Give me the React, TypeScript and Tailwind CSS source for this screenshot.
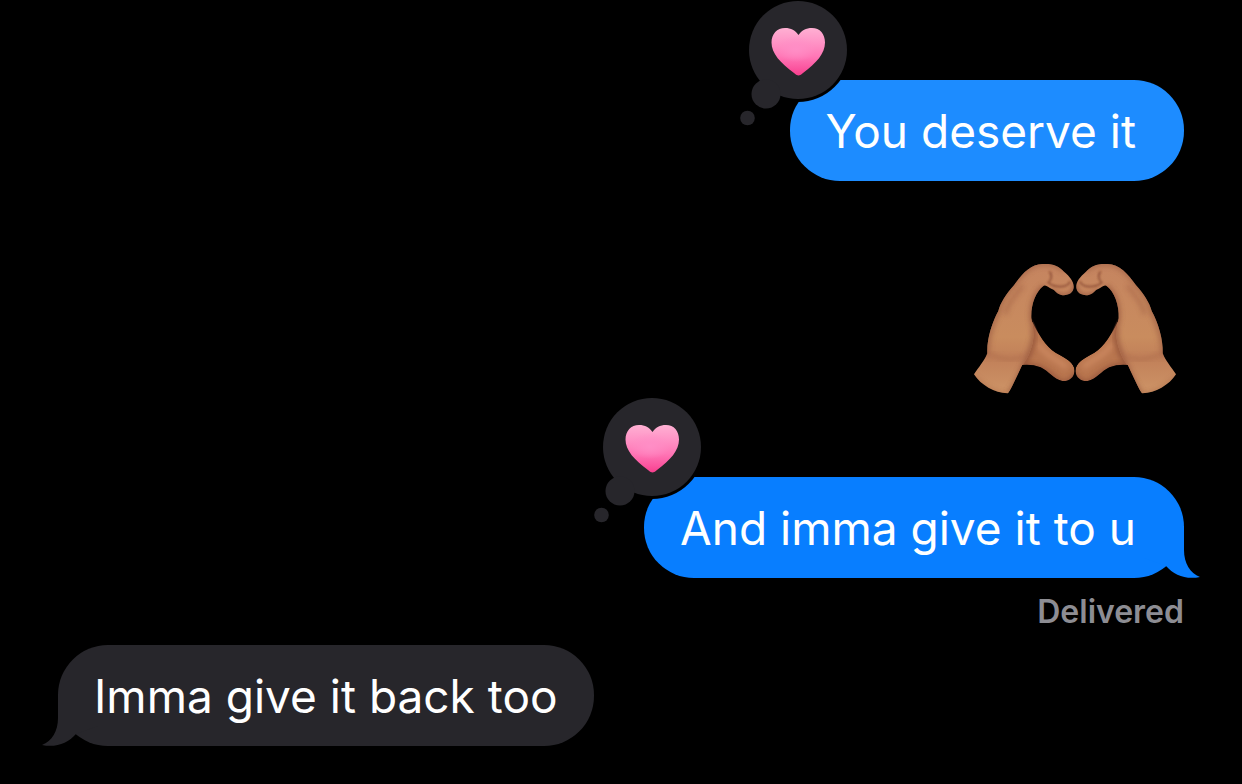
import React from 'react';

interface Message {
    id: number;
    sent: boolean;
    text: string;
    bubble: string;
    loved?: boolean;
    tail?: boolean;
}

const Heart = () => (
    <>
        <defs>
            <linearGradient id="heartFill" x1="0" y1="0" x2="0" y2="1">
                <stop offset="0" stopColor="#ffb0d3" />
                <stop offset="0.3" stopColor="#ff94c6" />
                <stop offset="0.6" stopColor="#ff77b6" />
                <stop offset="0.85" stopColor="#fb559f" />
                <stop offset="1" stopColor="#f83f8e" />
            </linearGradient>
            <radialGradient id="heartGlow">
                <stop offset="0" stopColor="#ff8ec6" />
                <stop offset="1" stopColor="#ff8ec6" stopOpacity="0" />
            </radialGradient>
        </defs>
        <path
            d="M60.500 75.500C59.300 75.500 58.200 74.800 56 73C42.500 63 33.500 53.500 33.500 42.500C33.500 34 39 28 47 28C53 28 57.500 30.500 60.500 35C63.500 30.500 68 28 74 28C82 28 87 34 87 42.500C87 53.500 78.500 63 65 73C62.800 74.800 61.700 75.500 60.500 75.500Z"
            fill="url(#heartFill)"
        />
        <ellipse cx="58" cy="49" rx="20" ry="13" fill="url(#heartGlow)" />
    </>
);

const Reaction = () => (
    <svg
        role="img"
        aria-label="Loved"
        className="absolute -top-20 -left-[52px]"
        width="116"
        height="128"
        viewBox="0 0 116 128"
    >
        {/* Black ring cuts the badge out of the bubble */}
        <circle cx="60" cy="50" r="52" fill="#000" />
        <g fill="#27262b">
            <circle cx="60" cy="50" r="49" />
            <circle cx="28" cy="94" r="14.500" />
            <circle cx="9.500" cy="118" r="7.300" />
        </g>
        <Heart />
    </svg>
);

const Tail = ({ sent }: { sent: boolean }) => (
    <svg
        aria-hidden="true"
        className={sent ? 'absolute bottom-0 -right-4 text-[#087eff]' : 'absolute bottom-0 -left-4 -scale-x-100 text-[#27262b]'}
        width="56"
        height="52"
        viewBox="0 0 56 52"
    >
        <path d="M0 0H40V24C40 37 46 47 56 51C42 54 30 49 22 40L0 32Z" fill="currentColor" />
    </svg>
);

const Hand = () => (
    <g clipPath="url(#handClip)">
        <path
            d="M205 215C222 250 245 290 275 308C305 324 332 338 332 363C330 385 312 395 295 393C270 388 255 364 230 352C210 344 190 343 165 346Z"
            fill="#b9764f"
        />
        <path d="M222 280C245 318 275 325 308 352" stroke="#c9855d" strokeWidth="18" fill="none" filter="url(#soft)" />
        <path d="M175 350C235 338 255 375 292 398C315 400 333 385 336 365" stroke="#8f5039" strokeWidth="14" opacity="0.800" fill="none" filter="url(#soft)" />
        <path d="M203 215C214 250 210 290 178 345" stroke="#8a4c35" strokeWidth="16" opacity="0.700" fill="none" filter="url(#soft)" />
        <g clipPath="url(#palmClip)">
            <rect x="20" y="30" width="330" height="420" fill="url(#palmFill)" />
            <path d="M68 320C64 270 83 215 101 183C105 158 123 128 146 103C171 68 200 39 235 38C265 36 290 46 304 61" stroke="#a5664a" strokeWidth="20" opacity="0.800" fill="none" filter="url(#soft)" />
            <path d="M242 110C217 128 203 165 206 205C216 240 214 270 198 307C178 352 158 412 136 432" stroke="#9a5a40" strokeWidth="18" opacity="0.800" fill="none" filter="url(#soft)" />
            <path d="M80 312C108 328 150 335 178 318" stroke="#ac6a4b" strokeWidth="14" opacity="0.500" fill="none" filter="url(#soft)" />
            <path d="M176 108C152 138 128 165 126 193" stroke="#a05f45" strokeWidth="9" opacity="0.700" fill="none" filter="url(#soft)" />
            <path d="M28 378C58 410 93 434 135 435" stroke="#a96b49" strokeWidth="9" opacity="0.700" fill="none" filter="url(#soft)" />
            <path d="M256 64C265 74 264 88 253 98C262 106 274 110 288 110C304 110 314 104 319 94" stroke="#83452f" strokeWidth="5" opacity="0.800" fill="none" filter="url(#crease)" />
            <path d="M258 122C275 134 292 144 312 137C328 130 335 115 333 98" stroke="#99583f" strokeWidth="12" fill="none" filter="url(#soft)" />
        </g>
    </g>
);

const HeartHands = () => (
    <svg role="img" aria-label="Heart hands" width="202" height="132" viewBox="30 39 606 396" className="mr-2">
        <defs>
            <filter id="soft" x="-40%" y="-40%" width="180%" height="180%">
                <feGaussianBlur stdDeviation="8" />
            </filter>
            <filter id="crease" x="-30%" y="-30%" width="160%" height="160%">
                <feGaussianBlur stdDeviation="3" />
            </filter>
            <linearGradient id="palmFill" x1="0" y1="0" x2="0" y2="1">
                <stop offset="0" stopColor="#c58460" />
                <stop offset="0.550" stopColor="#c98c5e" />
                <stop offset="0.700" stopColor="#c18059" />
                <stop offset="0.900" stopColor="#cb9064" />
            </linearGradient>
            <clipPath id="palmClip">
                <path d="M30 373C45 350 62 332 70 310C68 268 84 218 103 183C110 158 126 132 150 106C175 70 200 43 235 42C265 40 285 48 300 65C318 80 330 95 329 112C328 130 310 138 292 135C275 130 272 118 262 116C252 113 248 103 238 108C215 125 200 165 202 205C209 235 212 262 203 290C195 315 188 330 175 345C165 370 148 410 132 430C95 431 50 405 30 373Z" />
            </clipPath>
            <clipPath id="handClip">
                <path d="M30 30H332V205H205C222 250 245 290 275 308C305 324 332 338 332 363C330 385 312 395 295 393C270 388 255 364 230 352C210 344 190 343 175 345L132 435H20Z" />
            </clipPath>
        </defs>
        <Hand />
        <g transform="translate(666 0) scale(-1 1)">
            <Hand />
        </g>
    </svg>
);

const Bubble = ({ message }: { message: Message }) => (
    <div
        className={`relative rounded-[50px] pt-[21px] pb-5 text-[46px] leading-[60px] whitespace-nowrap text-white ${
            message.sent ? 'self-end pr-12 pl-9' : 'self-start px-9'
        } ${message.bubble}`}
    >
        {message.tail && <Tail sent={message.sent} />}
        {message.loved && <Reaction />}
        <p className="relative">{message.text}</p>
    </div>
);

const deserve: Message = { id: 1, sent: true, text: 'You deserve it', bubble: 'bg-[#1d8cff]', loved: true };
const give: Message = { id: 2, sent: true, text: 'And imma give it to u', bubble: 'bg-[#087eff]', loved: true, tail: true };
const back: Message = { id: 3, sent: false, text: 'Imma give it back too', bubble: 'bg-[#27262b]', tail: true };

export default function App() {
    return (
        <main className="flex min-h-screen flex-col overflow-x-hidden bg-black px-[58px] pt-20 font-['Inter',sans-serif]">
            <Bubble message={deserve} />
            <div className="flex justify-end py-[82px]">
                <HeartHands />
            </div>
            <Bubble message={give} />
            <span className="mt-3.5 mb-[13px] self-end text-[32px] leading-10 font-semibold text-[#8d8d93]">Delivered</span>
            <Bubble message={back} />
        </main>
    );
}
